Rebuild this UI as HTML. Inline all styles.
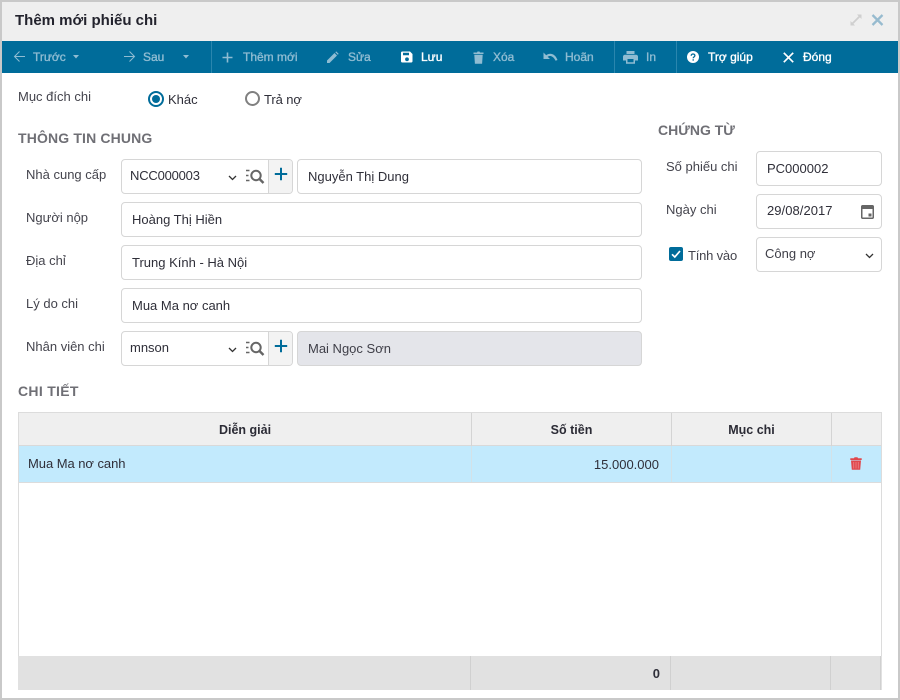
<!DOCTYPE html>
<html lang="vi">
<head>
<meta charset="utf-8">
<title>Thêm mới phiếu chi</title>
<style>
html,body{margin:0;padding:0;background:#fff}
#w{position:relative;width:900px;height:700px;overflow:hidden;background:#fff;font-family:"Liberation Sans",Arial,sans-serif;font-size:13px;color:#2f2f39}
#w div,#w span,#w svg{position:absolute;box-sizing:border-box}
.t{white-space:nowrap;line-height:16px;height:16px}
.l{color:#44444d}
.h{font-weight:bold;font-size:14px;color:#6f6f75;letter-spacing:.15px}
.box{background:#fff;border:1px solid #d6d6d6;border-radius:4px}
.tb{color:#8fbcd2;font-size:12px;-webkit-text-stroke:.35px #8fbcd2}
.tw{color:#fff;font-size:12px;-webkit-text-stroke:.35px #fff}
.th{font-weight:bold;text-align:center;color:#2b2b35;font-size:12.5px}
.sep{background:#2a86ae;width:1px;top:41px;height:32px}
</style>
</head>
<body>
<div id="w">
  <!-- window frame -->
  <div style="left:0;top:0;width:900px;height:700px;border:2px solid #c9c9c9"></div>
  <div style="left:2px;top:2px;width:896px;height:39px;background:#efefef"></div>
  <div class="t" style="left:15px;top:12px;font-size:15px;font-weight:bold;color:#23232d;line-height:18px;height:18px">Thêm mới phiếu chi</div>
  <svg style="left:850px;top:14px" width="12" height="12" viewBox="0 0 12 12"><path d="M7 .5h4.500V5L9.900 3.400 3.400 9.900 5 11.500H.5V7l1.600 1.600 6.500-6.500z" fill="#cfcfcf"/></svg>
  <svg style="left:871px;top:14px" width="13" height="12" viewBox="0 0 13 12"><path d="M1.500 1l10 10M11.500 1l-10 10" stroke="#97bbcf" stroke-width="2.300" fill="none"/></svg>

  <!-- toolbar -->
  <div style="left:2px;top:41px;width:896px;height:32px;background:#006c9a"></div>
  <div class="sep" style="left:211px"></div>
  <div class="sep" style="left:614px"></div>
  <div class="sep" style="left:676px"></div>

  <svg style="left:13px;top:50px" width="13" height="13" viewBox="0 0 13 13"><path d="M12 6.500H2M6.500 1.500l-5 5 5 5" stroke="#8fbcd2" stroke-width="1" fill="none"/></svg>
  <div class="t tb" style="left:33px;top:49px">Trước</div>
  <svg style="left:72px;top:55px" width="8" height="4" viewBox="0 0 8 4"><path d="M1 0h6L4 3.500z" fill="#8fbcd2"/></svg>

  <svg style="left:123px;top:50px" width="13" height="13" viewBox="0 0 13 13"><path d="M1 6.500h10M6.500 1.500l5 5-5 5" stroke="#8fbcd2" stroke-width="1" fill="none"/></svg>
  <div class="t tb" style="left:143px;top:49px">Sau</div>
  <svg style="left:182px;top:55px" width="8" height="4" viewBox="0 0 8 4"><path d="M1 0h6L4 3.500z" fill="#8fbcd2"/></svg>

  <svg style="left:222px;top:52px" width="11" height="11" viewBox="0 0 11 11"><path d="M5.500 .5v10M.5 5.500h10" stroke="#8fbcd2" stroke-width="1.600" fill="none"/></svg>
  <div class="t tb" style="left:243px;top:49px">Thêm mới</div>

  <svg style="left:326px;top:51px" width="13" height="13" viewBox="0 0 13 13"><path d="M1 9.500L8.500 2l2.500 2.500L3.500 12H1z M9.300 1.200l.9-.8 2.500 2.500-.9.800z" fill="#8fbcd2"/></svg>
  <div class="t tb" style="left:348px;top:49px">Sửa</div>

  <svg style="left:401px;top:51px" width="12" height="12" viewBox="0 0 12 12"><path fill="#fff" fill-rule="evenodd" d="M1.200 0.500h7.800L11.500 3v7.300c0 .7-.5 1.200-1.200 1.200H1.200C.5 11.500 0 11 0 10.300V1.700C0 1 .5.500 1.200.500zM2 1.800v2.500h6V1.800zM6 6.400a1.900 1.900 0 100 3.800 1.900 1.900 0 000-3.800z"/></svg>
  <div class="t tw" style="left:421px;top:49px">Lưu</div>

  <svg style="left:473px;top:51px" width="11" height="13" viewBox="0 0 11 13"><path d="M.5 1.500h3.500L4.500.5h2L7 1.500h3.500V3H.5zM1.300 3.800h8.400l-.6 9H1.900z" fill="#8fbcd2"/></svg>
  <div class="t tb" style="left:493px;top:49px">Xóa</div>

  <svg style="left:543px;top:52px" width="15" height="10" viewBox="0 0 15 10"><path d="M.5 .5v6.500h6.500L4.600 4.700C6.500 3.300 10.200 3.400 12.600 8.800L14.500 8C12 1.200 6.500 .6 3.200 3.200z" fill="#8fbcd2"/></svg>
  <div class="t tb" style="left:565px;top:49px">Hoãn</div>

  <svg style="left:623px;top:51px" width="15" height="13" viewBox="0 0 15 13"><path fill="#8fbcd2" fill-rule="evenodd" d="M3.500 0h8v3h-8zM2 3.700h11c1 0 2 .8 2 1.800v4h-3v3.200H3V9.500H0v-4c0-1 1-1.800 2-1.800zM4.500 8v3.300h6V8z"/></svg>
  <div class="t tb" style="left:646px;top:49px">In</div>

  <svg style="left:687px;top:51px" width="12" height="12" viewBox="0 0 12 12"><circle cx="6" cy="6" r="6" fill="#fff"/><path d="M4.200 4.700C4.200 3.600 5 3 6 3s1.900.6 1.900 1.600c0 1.300-1.700 1.300-1.700 2.700" stroke="#006c9a" stroke-width="1.300" fill="none"/><rect x="5.500" y="8.300" width="1.400" height="1.300" fill="#006c9a"/></svg>
  <div class="t tw" style="left:708px;top:49px">Trợ giúp</div>

  <svg style="left:783px;top:52px" width="11" height="11" viewBox="0 0 11 11"><path d="M.8.800l9.400 9.400M10.200.800L.8 10.200" stroke="#fff" stroke-width="1.700" fill="none"/></svg>
  <div class="t tw" style="left:803px;top:49px">Đóng</div>

  <!-- purpose -->
  <div class="t l" style="left:18px;top:89px">Mục đích chi</div>
  <div style="left:148px;top:91px;width:16px;height:16px;border:2px solid #006c9a;border-radius:50%"></div>
  <div style="left:152px;top:95px;width:8px;height:8px;background:#006c9a;border-radius:50%"></div>
  <div class="t" style="left:168px;top:92px">Khác</div>
  <div style="left:245px;top:91px;width:15px;height:15px;border:2px solid #808080;border-radius:50%"></div>
  <div class="t" style="left:264px;top:92px;letter-spacing:-.1px">Trả nợ</div>

  <!-- general info -->
  <div class="t h" style="left:18px;top:130px">THÔNG TIN CHUNG</div>

  <div class="t l" style="left:26px;top:167px">Nhà cung cấp</div>
  <div class="box" style="left:121px;top:159px;width:172px;height:35px"></div>
  <div style="left:268px;top:160px;width:24px;height:33px;background:#f3f3f3;border-left:1px solid #d6d6d6;border-radius:0 3px 3px 0"></div>
  <div class="t" style="left:130px;top:168px;letter-spacing:-.2px">NCC000003</div>
  <svg style="left:228px;top:175px" width="9" height="6" viewBox="0 0 9 6"><path d="M1 1l3.500 3.500L8 1" stroke="#333" stroke-width="1.300" fill="none"/></svg>
  <svg style="left:246px;top:169px" width="19" height="16" viewBox="0 0 19 16"><path d="M0 1.500h3.500M0 6.500h2.500M0 11.500h3.500" stroke="#666" stroke-width="1.600" fill="none"/><circle cx="10" cy="6.500" r="4.700" stroke="#666" stroke-width="2" fill="none"/><path d="M13.500 10l4 4" stroke="#666" stroke-width="2.400" fill="none"/></svg>
  <svg style="left:274px;top:167px" width="14" height="14" viewBox="0 0 14 14"><path d="M7 .8v12.400M.8 7h12.400" stroke="#006c9a" stroke-width="2" fill="none"/></svg>
  <div class="box" style="left:297px;top:159px;width:345px;height:35px"></div>
  <div class="t" style="left:308px;top:169px">Nguyễn Thị Dung</div>

  <div class="t l" style="left:26px;top:210px">Người nộp</div>
  <div class="box" style="left:121px;top:202px;width:521px;height:35px"></div>
  <div class="t" style="left:132px;top:212px">Hoàng Thị Hiền</div>

  <div class="t l" style="left:26px;top:253px">Địa chỉ</div>
  <div class="box" style="left:121px;top:245px;width:521px;height:35px"></div>
  <div class="t" style="left:132px;top:255px">Trung Kính - Hà Nội</div>

  <div class="t l" style="left:26px;top:296px">Lý do chi</div>
  <div class="box" style="left:121px;top:288px;width:521px;height:35px"></div>
  <div class="t" style="left:132px;top:298px">Mua Ma nơ canh</div>

  <div class="t l" style="left:26px;top:339px">Nhân viên chi</div>
  <div class="box" style="left:121px;top:331px;width:172px;height:35px"></div>
  <div style="left:268px;top:332px;width:24px;height:33px;background:#f3f3f3;border-left:1px solid #d6d6d6;border-radius:0 3px 3px 0"></div>
  <div class="t" style="left:130px;top:340px">mnson</div>
  <svg style="left:228px;top:347px" width="9" height="6" viewBox="0 0 9 6"><path d="M1 1l3.500 3.500L8 1" stroke="#333" stroke-width="1.300" fill="none"/></svg>
  <svg style="left:246px;top:341px" width="19" height="16" viewBox="0 0 19 16"><path d="M0 1.500h3.500M0 6.500h2.500M0 11.500h3.500" stroke="#666" stroke-width="1.600" fill="none"/><circle cx="10" cy="6.500" r="4.700" stroke="#666" stroke-width="2" fill="none"/><path d="M13.500 10l4 4" stroke="#666" stroke-width="2.400" fill="none"/></svg>
  <svg style="left:274px;top:339px" width="14" height="14" viewBox="0 0 14 14"><path d="M7 .8v12.400M.8 7h12.400" stroke="#006c9a" stroke-width="2" fill="none"/></svg>
  <div class="box" style="left:297px;top:331px;width:345px;height:35px;background:#e4e5ea"></div>
  <div class="t" style="left:308px;top:341px;color:#3f3f48">Mai Ngọc Sơn</div>

  <!-- voucher -->
  <div class="t h" style="left:658px;top:122px;letter-spacing:0">CHỨNG TỪ</div>
  <div class="t l" style="left:666px;top:159px">Số phiếu chi</div>
  <div class="box" style="left:756px;top:151px;width:126px;height:35px"></div>
  <div class="t" style="left:767px;top:161px">PC000002</div>

  <div class="t l" style="left:666px;top:202px">Ngày chi</div>
  <div class="box" style="left:756px;top:194px;width:126px;height:35px"></div>
  <div class="t" style="left:767px;top:203px;letter-spacing:.05px">29/08/2017</div>
  <svg style="left:861px;top:204px" width="13" height="15" viewBox="0 0 13 15"><path fill="#666" fill-rule="evenodd" d="M1.500 1h10c.8 0 1.500.7 1.500 1.500v11c0 .8-.7 1.500-1.500 1.500h-10C.7 15 0 14.300 0 13.500v-11C0 1.700.7 1 1.500 1zM1.500 5v8.500h10V5zM7.500 9.500h3v3h-3z"/></svg>

  <div style="left:669px;top:247px;width:14px;height:14px;background:#006c9a;border-radius:2px"></div>
  <svg style="left:669px;top:247px" width="14" height="14" viewBox="0 0 14 14"><path d="M3 7.300l2.800 2.700L11 4" stroke="#fff" stroke-width="1.700" fill="none"/></svg>
  <div class="t l" style="left:688px;top:248px;letter-spacing:-.2px">Tính vào</div>
  <div class="box" style="left:756px;top:237px;width:126px;height:35px"></div>
  <div class="t" style="left:765px;top:246px;color:#3f3f48">Công nợ</div>
  <svg style="left:865px;top:253px" width="9" height="6" viewBox="0 0 9 6"><path d="M1 1l3.500 3.500L8 1" stroke="#333" stroke-width="1.300" fill="none"/></svg>

  <!-- details -->
  <div class="t h" style="left:18px;top:383px;letter-spacing:.3px">CHI TIẾT</div>

  <div style="left:18px;top:412px;width:864px;height:278px;border:1px solid #dcdcdc;border-bottom:0;background:#fff"></div>
  <div style="left:19px;top:413px;width:862px;height:33px;background:#efefef;border-bottom:1px solid #d9d9d9"></div>
  <div style="left:471px;top:413px;width:1px;height:33px;background:#d4d4d4"></div>
  <div style="left:671px;top:413px;width:1px;height:33px;background:#d4d4d4"></div>
  <div style="left:831px;top:413px;width:1px;height:33px;background:#d4d4d4"></div>
  <div class="t th" style="left:19px;top:422px;width:452px">Diễn giải</div>
  <div class="t th" style="left:472px;top:422px;width:199px">Số tiền</div>
  <div class="t th" style="left:672px;top:422px;width:159px">Mục chi</div>

  <div style="left:19px;top:446px;width:862px;height:37px;background:#c2eafd;border-bottom:1px solid #dcdcdc"></div>
  <div style="left:471px;top:446px;width:1px;height:36px;background:#d3e2e8"></div>
  <div style="left:671px;top:446px;width:1px;height:36px;background:#d3e2e8"></div>
  <div style="left:831px;top:446px;width:1px;height:36px;background:#d3e2e8"></div>
  <div class="t" style="left:28px;top:456px;letter-spacing:-.05px">Mua Ma nơ canh</div>
  <div class="t" style="left:472px;top:457px;width:187px;text-align:right">15.000.000</div>
  <svg style="left:850px;top:457px" width="12" height="13" viewBox="0 0 12 13"><path d="M.3 1.200h3.700l.5-1h3l.5 1h3.700V3H.3zM1 3.500h10l-.8 9.300H1.800z" fill="#e0474c"/><path d="M3.800 5v6.500M6 5v6.500M8.200 5v6.500" stroke="#f09a9c" stroke-width=".6"/></svg>

  <div style="left:18px;top:656px;width:864px;height:34px;background:#e1e1e1"></div>
  <div style="left:470px;top:656px;width:1px;height:34px;background:#d0d0d0"></div>
  <div style="left:670px;top:656px;width:1px;height:34px;background:#d0d0d0"></div>
  <div style="left:830px;top:656px;width:1px;height:34px;background:#d0d0d0"></div>
  <div style="left:880px;top:656px;width:1px;height:34px;background:#d0d0d0"></div>
  <div class="t" style="left:560px;top:666px;width:100px;text-align:right;font-weight:bold">0</div>
</div>
</body>
</html>
